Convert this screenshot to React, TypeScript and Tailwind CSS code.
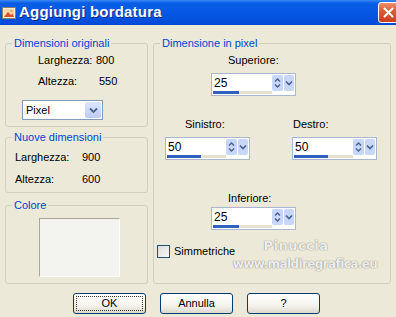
import React from 'react'

// ---------------------------------------------------------------------------
// Piccoli controlli in stile Windows XP
// ---------------------------------------------------------------------------

const FONT = "font-['Liberation_Sans',Arial,sans-serif]"

function TitleIcon() {
  return (
    <svg width="14" height="14" viewBox="0 0 14 14">
      <rect x="0.5" y="1.5" width="13" height="11" fill="#F4EBD9" stroke="#8A7F6A" />
      <rect x="2" y="3" width="10" height="8" fill="#F7D6A9" />
      <path d="M2 11 L6 6 L9 9 L10.5 7.5 L12 11 Z" fill="#D9542B" />
      <circle cx="9.5" cy="5" r="1.2" fill="#F6A34B" />
    </svg>
  )
}

function CloseButton() {
  return (
    <div className="mr-[-3px] flex h-[21px] w-[21px] items-center justify-center rounded-[3px] border border-white bg-[linear-gradient(180deg,#F08E6C_0%,#DB5A33_45%,#C8411C_100%)]">
      <svg width="11" height="11" viewBox="0 0 11 11">
        <path d="M1.5 1.5 L9.5 9.5 M9.5 1.5 L1.5 9.5" stroke="white" strokeWidth="2" strokeLinecap="round" />
      </svg>
    </div>
  )
}

interface GroupProps {
  title: string
  className?: string
  children: React.ReactNode
}

const Group: React.FC<GroupProps> = ({ title, className, children }) => (
  <fieldset className={`relative rounded-[3px] border border-[#D0D0BF] ${className ?? ''}`}>
    <legend className="ml-[6px] px-[2px] text-[11px] leading-[13px] text-[#0046D5]">{title}</legend>
    {children}
  </fieldset>
)

interface SpinProps {
  value: number
  bar: number
}

const SpinBox: React.FC<SpinProps> = ({ value, bar }) => (
  <div className="flex h-[23px] w-[85px] border border-[#A9B8CF] bg-white">
    <div className="flex flex-1 flex-col">
      <div className="flex-1 pl-[2px] pt-[2px] text-[12px] leading-[14px] text-black">{value}</div>
      <div className="mb-[1px] ml-[1px] h-[3px] bg-[#E4E1D3]">
        <div className="h-full bg-[#2F61BD]" style={{ width: bar }} />
      </div>
    </div>
    <div className="flex h-[17px] pt-[1px]">
      <div className="flex w-[11px] items-center justify-center rounded-[2px] bg-[#C8D7F8]">
        <svg width="7" height="12" viewBox="0 0 7 12">
          <path d="M1 4.5 L3.5 2 L6 4.5" fill="none" stroke="#4A5F8F" strokeWidth="1.4" />
          <path d="M1 7.5 L3.5 10 L6 7.5" fill="none" stroke="#4A5F8F" strokeWidth="1.4" />
        </svg>
      </div>
      <div className="ml-[1px] mr-[1px] flex w-[10px] items-center justify-center rounded-[2px] bg-[#C8D7F8]">
        <svg width="8" height="6" viewBox="0 0 8 6">
          <path d="M1 1.5 L4 4.5 L7 1.5" fill="none" stroke="#4A5F8F" strokeWidth="1.6" />
        </svg>
      </div>
    </div>
  </div>
)

function Dropdown() {
  return (
    <div className="flex h-[20px] w-[81px] items-center border border-[#7F9DB9] bg-white">
      <span className="flex-1 pl-[3px] text-[11px] text-black">Pixel</span>
      <div className="m-[1px] flex h-[16px] w-[16px] items-center justify-center rounded-[2px] bg-[linear-gradient(180deg,#DCE6FD_0%,#BACCF6_100%)]">
        <svg width="9" height="7" viewBox="0 0 9 7">
          <path d="M1 1.5 L4.5 5 L8 1.5" fill="none" stroke="#4D6185" strokeWidth="1.8" />
        </svg>
      </div>
    </div>
  )
}

interface XpButtonProps {
  label: string
  focused?: boolean
}

const XpButton: React.FC<XpButtonProps> = ({ label, focused }) => (
  <div className="flex h-[21px] w-[73px] items-center justify-center rounded-[3px] border border-[#003C74] bg-[linear-gradient(180deg,#FFFFFF_0%,#F4F3EE_60%,#DCD9CC_100%)] p-[2px]">
    <div
      className={`flex h-full w-full items-center justify-center text-[11px] text-black ${
        focused ? 'border border-dotted border-[#3A3A3A]' : ''
      }`}
    >
      {label}
    </div>
  </div>
)

// ---------------------------------------------------------------------------
// App
// ---------------------------------------------------------------------------

export default function App() {
  return (
    <div className={`flex h-[317px] w-[396px] flex-col overflow-hidden bg-[#ECE9D8] ${FONT}`}>
      {/* Barra del titolo */}
      <div className="flex h-[25px] items-center overflow-hidden bg-[linear-gradient(180deg,#3B8CF5_0%,#0A5EE6_12%,#0558E4_55%,#0049D6_100%)] pl-[2px] pr-0">
        <TitleIcon />
        <span className="ml-[3px] flex-1 text-[15px] font-bold tracking-[0.2px] text-white [text-shadow:1px_1px_0_#0B2C8A]">
          Aggiungi bordatura
        </span>
        <CloseButton />
      </div>

      <div className="flex gap-[5px] px-[5px] pt-[12px]">
        {/* Colonna sinistra */}
        <div className="flex w-[143px] flex-col">
          <Group title="Dimensioni originali" className="h-[90px]">
            <div className="mt-[4px] flex flex-col gap-[8px] pl-[32px] text-[11px] leading-[13px] text-black">
              <div className="flex">
                <span className="w-[58px]">Larghezza:</span>
                <span>800</span>
              </div>
              <div className="flex">
                <span className="w-[61px]">Altezza:</span>
                <span>550</span>
              </div>
            </div>
            <div className="ml-[16px] mt-[12px]">
              <Dropdown />
            </div>
          </Group>

          <Group title="Nuove dimensioni" className="mt-[4px] h-[62px]">
            <div className="mt-[7px] flex flex-col gap-[9px] pl-[9px] text-[11px] leading-[13px] text-black">
              <div className="flex">
                <span className="w-[67px]">Larghezza:</span>
                <span>900</span>
              </div>
              <div className="flex">
                <span className="w-[67px]">Altezza:</span>
                <span>600</span>
              </div>
            </div>
          </Group>

          <Group title="Colore" className="mt-[6px] h-[85px]">
            <div className="ml-[33px] mt-[6px] h-[59px] w-[81px] border border-b-white border-l-[#ACA899] border-r-white border-t-[#ACA899] bg-[#F3F3EF]" />
          </Group>
        </div>

        {/* Colonna destra */}
        <Group title="Dimensione in pixel" className="h-[247px] w-[238px]">
          <div className="flex flex-col text-[11px] leading-[13px] text-black">
            <span className="ml-[74px] mt-[4px]">Superiore:</span>
            <div className="ml-[57px] mt-[6px]">
              <SpinBox value={25} bar={26} />
            </div>

            <div className="mt-[22px] flex">
              <span className="ml-[31px] w-[108px]">Sinistro:</span>
              <span>Destro:</span>
            </div>
            <div className="mt-[6px] flex">
              <div className="ml-[11px]">
                <SpinBox value={50} bar={34} />
              </div>
              <div className="ml-[42px]">
                <SpinBox value={50} bar={34} />
              </div>
            </div>

            <span className="ml-[74px] mt-[32px]">Inferiore:</span>
            <div className="ml-[57px] mt-[2px]">
              <SpinBox value={25} bar={26} />
            </div>

            <div className="ml-[3px] mt-[15px] flex items-center">
              <div className="h-[13px] w-[13px] border border-[#1C5180] bg-[linear-gradient(135deg,#DCDBD5_0%,#F8F8F6_100%)]" />
              <span className="ml-[4px]">Simmetriche</span>
            </div>
          </div>

          {/* Filigrana */}
          <div className="pointer-events-none absolute left-[78px] top-[186px] flex w-[146px] flex-col items-center font-['DejaVu_Sans',sans-serif] font-bold leading-[19px] text-white/85 [text-shadow:0_0_1px_#8C8A7E,0_0_1px_#8C8A7E]">
            <span className="ml-[-18px] text-[13px] tracking-[0.5px]">Pinuccia</span>
            <span className="text-[12px] tracking-[-0.6px]">www.maldiregrafica.eu</span>
          </div>
        </Group>
      </div>

      {/* Pulsanti */}
      <div className="mt-[9px] flex gap-[14px] pl-[73px]">
        <XpButton label="OK" focused />
        <XpButton label="Annulla" />
        <XpButton label="?" />
      </div>
    </div>
  )
}
